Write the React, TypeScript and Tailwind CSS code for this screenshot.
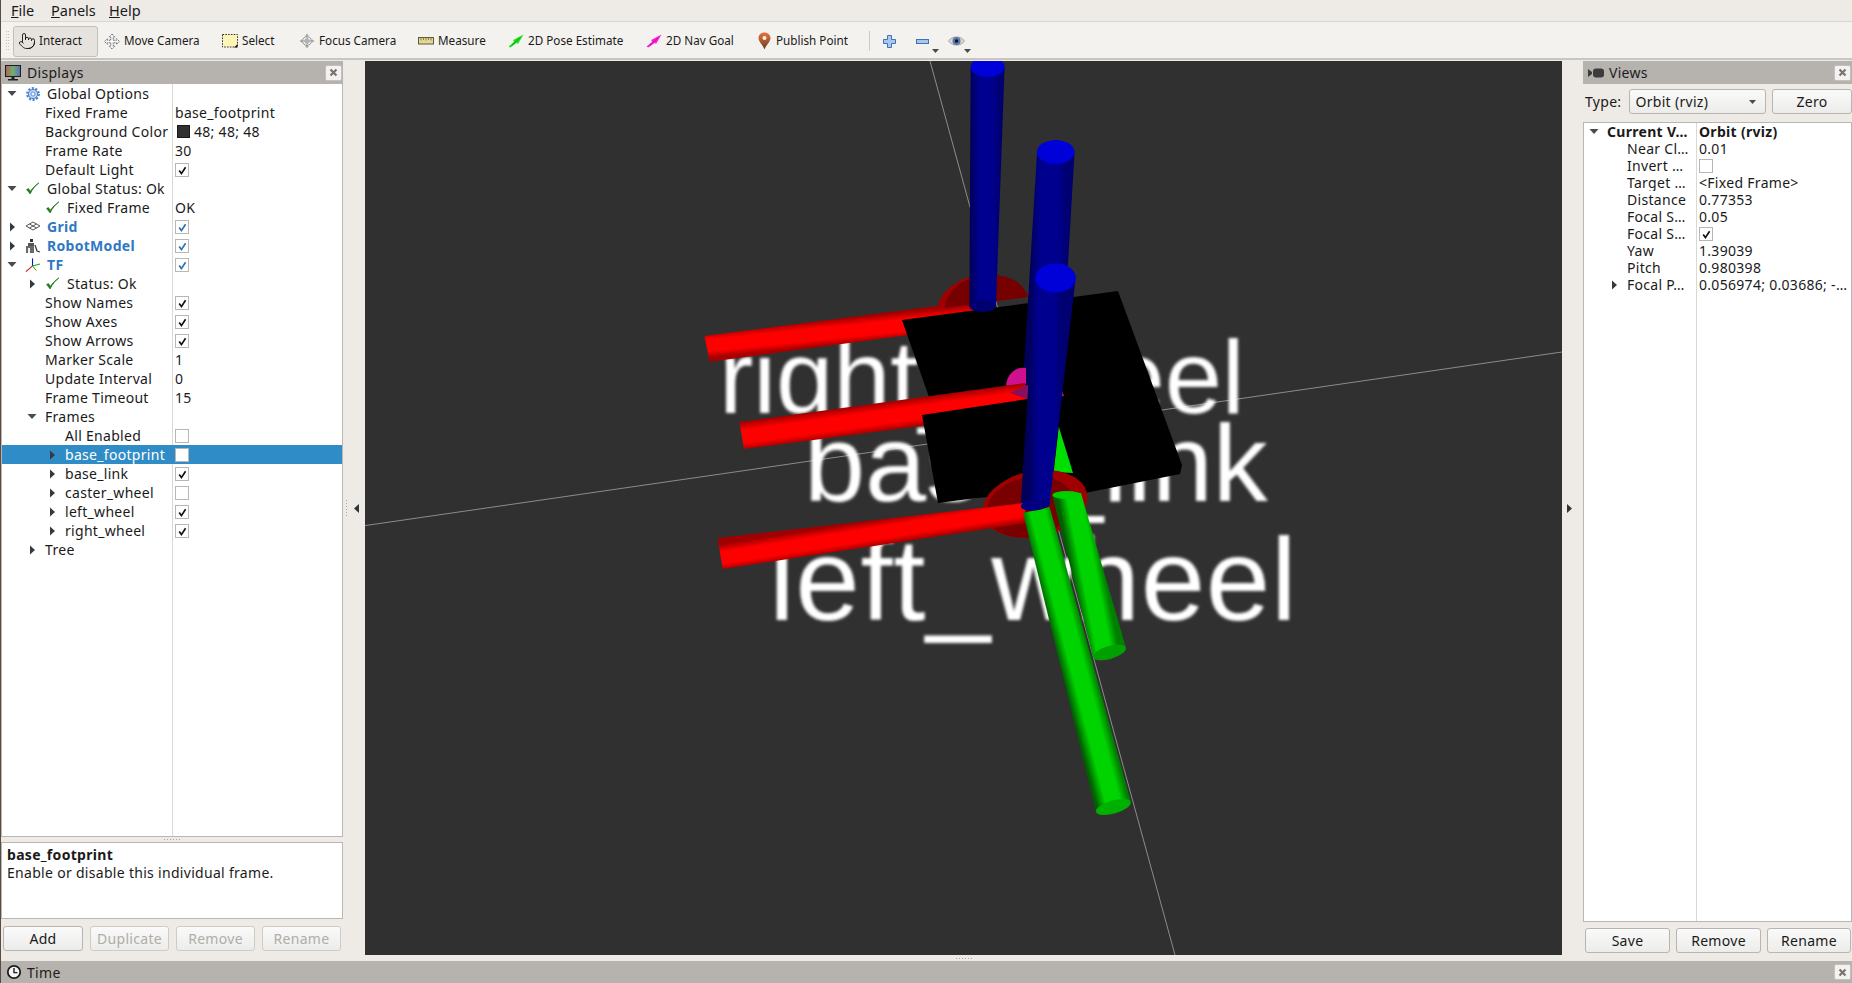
import React from "react";
import { Pointer } from "lucide-react";

type P = [number, number];

function Cyl({ id, a1, a2, b1, b2, c }: { id: string; a1: P; a2: P; b1: P; b2: P; c: [string, string, string] }) {
  const x1 = (a1[0] + b1[0]) / 2, y1 = (a1[1] + b1[1]) / 2, x2 = (a2[0] + b2[0]) / 2, y2 = (a2[1] + b2[1]) / 2;
  return (
    <>
      <defs>
        <linearGradient id={id} gradientUnits="userSpaceOnUse" x1={x1} y1={y1} x2={x2} y2={y2}>
          <stop offset="0" stopColor={c[0]} />
          <stop offset="0.3" stopColor={c[1]} />
          <stop offset="0.75" stopColor={c[1]} />
          <stop offset="1" stopColor={c[2]} />
        </linearGradient>
      </defs>
      <polygon points={`${a1} ${a2} ${b2} ${b1}`} fill={`url(#${id})`} />
    </>
  );
}

const BLUE: [string, string, string] = ["#00005a", "#00008e", "#000070"];
const RED: [string, string, string] = ["#a00000", "#ff0000", "#a80000"];
const GREEN: [string, string, string] = ["#006000", "#00d400", "#008000"];

function Scene() {
  return (
    <svg viewBox="365 61 1197 894" className="w-full h-full block" preserveAspectRatio="none">
      <defs>
        <filter id="soft" x="-5%" y="-5%" width="110%" height="110%">
          <feGaussianBlur stdDeviation="1.8" />
        </filter>
      </defs>
      <rect x="365" y="61" width="1197" height="894" fill="#303030" />
      <line x1="930" y1="61" x2="1175" y2="955" stroke="#8c8c8c" strokeWidth="1" />
      <line x1="365" y1="525.6" x2="1562" y2="352" stroke="#8c8c8c" strokeWidth="1" />
      <g fill="#ffffff" filter="url(#soft)" style={{ fontFamily: "'Liberation Sans', sans-serif" }}>
        <text x="719" y="413" fontSize="103" textLength="526">right_wheel</text>
        <text x="804" y="501" fontSize="110" textLength="464">base_link</text>
        <text x="769" y="620" fontSize="116" textLength="528">left_wheel</text>
      </g>

      <Cyl id="r1" a1={[704.5, 336]} a2={[709.7, 361.7]} b1={[975, 301]} b2={[975, 326]} c={RED} />
      <path d="M937 309 A 47 36 -8 0 1 1028 297 Z" fill="#a00000" />
      <path d="M945 308 A 42 30 -8 0 1 1028 297 Z" fill="#760000" />
      <polygon points="902,320 1118,291 1182,465 1180,474 1000,510 930,400" fill="#000000" />
      <Cyl id="b1" a1={[970.6, 67]} a2={[1004.6, 67]} b1={[969.4, 306]} b2={[996, 306]} c={BLUE} />
      <ellipse cx="982.7" cy="306" rx="13.3" ry="6" fill="#000070" />
      <ellipse cx="987.6" cy="67" rx="17" ry="10" fill="#0000d8" />

      <Cyl id="b2" a1={[1037, 153]} a2={[1074.5, 153]} b1={[1022, 400]} b2={[1060, 400]} c={BLUE} />
      <ellipse cx="1055.7" cy="152" rx="18.8" ry="12" fill="#0000d8" />

      <path d="M1006 386 A 17 19 0 0 1 1026 368 L1026 384 Z" fill="#d0108c" />
      <path d="M1060 385 L1064 396 L1026 400 Z" fill="#d0108c" />
      <Cyl id="r2" a1={[739.3, 422]} a2={[744, 449]} b1={[1025, 383]} b2={[1028, 412]} c={RED} />
      <polygon points="1010,393 1026,385 1048,392 1030,400" fill="#8a0f5a" />
      <polygon points="922,415 1034,398 1090,490 976,498 938,503" fill="#000000" />

      <polygon points="1058.8,426.7 1073,473 1053.7,472" fill="#00e000" />
      <ellipse cx="1035" cy="504" rx="53" ry="33" transform="rotate(-12 1035 504)" fill="#a00000" />
      <ellipse cx="1030" cy="507" rx="44" ry="30" transform="rotate(-12 1030 507)" fill="#780000" />
      <Cyl id="r3" a1={[717.6, 538]} a2={[722.7, 569]} b1={[1024, 503]} b2={[1027, 523]} c={RED} />

      <Cyl id="g2" a1={[1052.5, 496]} a2={[1081, 493]} b1={[1093, 657]} b2={[1126, 648]} c={GREEN} />
      <ellipse cx="1066.8" cy="495" rx="14.4" ry="4" fill="#00d000" />
      <ellipse cx="1109.5" cy="652.5" rx="17" ry="6.5" transform="rotate(-16 1109.5 652.5)" fill="#00a000" />

      <Cyl id="g1" a1={[1023, 513]} a2={[1049.7, 507]} b1={[1096, 812]} b2={[1130.8, 802]} c={GREEN} />
      <ellipse cx="1113.4" cy="807" rx="18" ry="6.5" transform="rotate(-16 1113.4 807)" fill="#00b000" />

      <Cyl id="b3" a1={[1035, 280]} a2={[1075.4, 280]} b1={[1020.8, 503]} b2={[1049.7, 503]} c={BLUE} />
      <ellipse cx="1035.2" cy="505" rx="14.5" ry="5.5" transform="rotate(-6 1035.2 505)" fill="#000080" />
      <ellipse cx="1055.5" cy="278" rx="20.4" ry="14.5" fill="#0000d8" />
    </svg>
  );
}

/* ------------ icons ------------ */
const Check = ({ c = "#111111" }: { c?: string }) => (
  <svg width="13" height="13" viewBox="0 0 13 13" className="block">
    <path d="M3.2 6.6 L5.4 9.6 L9.6 3.2" fill="none" stroke={c} strokeWidth="1.7" />
  </svg>
);
const Box = ({ on, c }: { on?: boolean; c?: string }) => (
  <span className="block w-[14px] h-[14px] border border-[#b9b6b3] bg-white">{on && <Check c={c} />}</span>
);
const ArrowR = () => (
  <svg width="7" height="10" viewBox="0 0 7 10" className="block"><path d="M1 0.5 L6 5 L1 9.5 Z" fill="#333b40" /></svg>
);
const ArrowD = () => (
  <svg width="10" height="7" viewBox="0 0 10 7" className="block"><path d="M0.5 1 L9.5 1 L5 6 Z" fill="#4a4a4a" /></svg>
);
const GreenCheck = () => (
  <svg width="16" height="16" viewBox="0 0 16 16" className="block">
    <path d="M1.6 8.6 L5.2 13 C7 8.6 10 5 14 1.8 C10 4.6 7.4 7.4 5.4 10.2 L3.4 7.6 Z" fill="#1f7a1f" stroke="#1f7a1f" strokeWidth="0.7" />
  </svg>
);
const Gear = () => (
  <svg width="16" height="16" viewBox="0 0 16 16" className="block">
    <circle cx="8" cy="8" r="5.6" fill="none" stroke="#4f82cc" strokeWidth="2.6" strokeDasharray="2 1.5" />
    <circle cx="8" cy="8" r="4.6" fill="#bcd3f2" stroke="#4f82cc" strokeWidth="1" />
    <circle cx="8" cy="8" r="2" fill="#f2f6fc" stroke="#4f82cc" strokeWidth="0.8" />
  </svg>
);
const GridIcon = () => (
  <svg width="16" height="16" viewBox="0 0 16 16" className="block">
    <path d="M1 7 L8 3 L15 7 L8 11 Z M4.5 5 L11.5 9 M11.5 5 L4.5 9" fill="none" stroke="#444" strokeWidth="0.9" />
  </svg>
);
const RobotIcon = () => (
  <svg width="16" height="16" viewBox="0 0 16 16" className="block">
    <rect x="5" y="1" width="3" height="3" fill="#333" />
    <rect x="3" y="5" width="6" height="3" fill="#555" />
    <rect x="1" y="8" width="8" height="7" fill="#6a6a6a" />
    <rect x="3" y="10" width="2" height="5" fill="#f2f2f2" />
    <path d="M10 7 L12 13 L15 14" fill="none" stroke="#333" strokeWidth="1.2" />
  </svg>
);
const TfIcon = () => (
  <svg width="17" height="16" viewBox="0 0 17 16" className="block">
    <path d="M8 9 L8 1" stroke="#1414d0" strokeWidth="1.2" />
    <path d="M8 9 L16 7" stroke="#10b010" strokeWidth="1.2" />
    <path d="M8 9 L1 15" stroke="#e01010" strokeWidth="1.2" />
    <path d="M8 9 L12 14" stroke="#10b010" strokeWidth="1" />
  </svg>
);
const Monitor = () => (
  <svg width="17" height="16" viewBox="0 0 17 16" className="block">
    <defs>
      <linearGradient id="scr" x1="0" y1="0" x2="1" y2="0">
        <stop offset="0" stopColor="#b0605c" />
        <stop offset="0.5" stopColor="#6fb06a" />
        <stop offset="1" stopColor="#5c6cb8" />
      </linearGradient>
    </defs>
    <rect x="0.5" y="0.5" width="15" height="11" fill="url(#scr)" stroke="#1c1c1c" />
    <rect x="6.5" y="12" width="3" height="2" fill="#222" />
    <rect x="3" y="14" width="10" height="1.5" fill="#222" />
  </svg>
);
const CamIcon = () => (
  <svg width="16" height="10" viewBox="0 0 16 10" className="block">
    <path d="M0 1 L4 4 L4 6 L0 9 Z" fill="#3c3c3c" />
    <rect x="5" y="0.5" width="11" height="9" rx="3" fill="#3c3c3c" />
  </svg>
);
const Clock = () => (
  <svg width="16" height="16" viewBox="0 0 16 16" className="block">
    <circle cx="8" cy="8" r="6.2" fill="#f5f5f5" stroke="#1e1e1e" strokeWidth="1.8" />
    <path d="M8 4 L8 8.6 L11.5 8.6" fill="none" stroke="#1e1e1e" strokeWidth="1.4" />
  </svg>
);
const MoveIcon = () => (
  <svg width="17" height="17" viewBox="0 0 17 17" className="block">
    <path d="M8.5 0.5 L11.5 3.8 L9.8 3.8 L9.8 7.2 L13.2 7.2 L13.2 5.5 L16.5 8.5 L13.2 11.5 L13.2 9.8 L9.8 9.8 L9.8 13.2 L11.5 13.2 L8.5 16.5 L5.5 13.2 L7.2 13.2 L7.2 9.8 L3.8 9.8 L3.8 11.5 L0.5 8.5 L3.8 5.5 L3.8 7.2 L7.2 7.2 L7.2 3.8 L5.5 3.8 Z" fill="#f8f8f8" stroke="#555" strokeWidth="0.9" strokeDasharray="1.6 0.8" />
  </svg>
);
const SelectIcon = () => (
  <svg width="16" height="14" viewBox="0 0 16 14" className="block">
    <rect x="0.5" y="0.5" width="15" height="12.5" fill="#fdf5b5" stroke="#333" strokeDasharray="1.6 1.2" />
    <path d="M12 13.5 L15.5 13.5 L15.5 10 Z" fill="#222" />
  </svg>
);
const FocusIcon = () => (
  <svg width="18" height="18" viewBox="0 0 18 18" className="block">
    <circle cx="9" cy="9" r="5" fill="#efefef" stroke="#8a8a8a" />
    <circle cx="9" cy="9" r="2.4" fill="none" stroke="#8a8a8a" strokeWidth="0.8" />
    <path d="M9 4 L9 14 M4 9 L14 9" stroke="#8a8a8a" strokeWidth="0.8" />
    <path d="M9 0.5 L11 3.5 L7 3.5 Z M9 17.5 L11 14.5 L7 14.5 Z M0.5 9 L3.5 7 L3.5 11 Z M17.5 9 L14.5 7 L14.5 11 Z" fill="#a8a8a8" />
  </svg>
);
const RulerIcon = () => (
  <svg width="16" height="8" viewBox="0 0 16 8" className="block">
    <rect x="0.5" y="0.5" width="15" height="6.5" fill="#e5d896" stroke="#5f5a3a" />
    <path d="M3 1 V3.5 M5.5 1 V3 M8 1 V3.5 M10.5 1 V3 M13 1 V3.5" stroke="#5f5a3a" strokeWidth="0.7" />
  </svg>
);
const ArrowIcon = ({ c, d }: { c: string; d: string }) => (
  <svg width="16" height="14" viewBox="0 0 16 14" className="block">
    <path d="M0.5 12.5 L6 8 L5.2 6 L15.5 0.5 L10 10 L8.8 8.8 L2.4 13.6 Z" fill={c} />
    <path d="M3.5 11.5 L12.5 3.5" stroke={d} strokeWidth="0.7" />
  </svg>
);
const PinIcon = () => (
  <svg width="13" height="18" viewBox="0 0 13 18" className="block">
    <defs>
      <linearGradient id="pin" x1="0" y1="0" x2="0" y2="1">
        <stop offset="0" stopColor="#e8743c" />
        <stop offset="1" stopColor="#6a3c22" />
      </linearGradient>
    </defs>
    <path d="M6.5 0.5 C3 0.5 0.5 3 0.5 6 C0.5 10 5 13 6.5 17.5 C8 13 12.5 10 12.5 6 C12.5 3 10 0.5 6.5 0.5 Z" fill="url(#pin)" />
    <circle cx="6.5" cy="6" r="2" fill="#fbeee6" />
  </svg>
);
const PlusIcon = () => (
  <svg width="13" height="13" viewBox="0 0 13 13" className="block">
    <path d="M4.5 0.5 H8.5 V4.5 H12.5 V8.5 H8.5 V12.5 H4.5 V8.5 H0.5 V4.5 H4.5 Z" fill="#a9c6ec" stroke="#4272b4" />
  </svg>
);
const MinusIcon = () => (
  <svg width="13" height="5" viewBox="0 0 13 5" className="block">
    <rect x="0.5" y="0.5" width="12" height="4" fill="#a9c6ec" stroke="#4272b4" />
  </svg>
);
const EyeIcon = () => (
  <svg width="17" height="12" viewBox="0 0 17 12" className="block">
    <path d="M0.5 6 C4 0.5 13 0.5 16.5 6 C13 11.5 4 11.5 0.5 6 Z" fill="#d8d8d8" stroke="#8f8f8f" strokeWidth="0.7" />
    <circle cx="8.5" cy="6" r="4" fill="#5b77a8" />
    <circle cx="8.5" cy="6" r="1.7" fill="#0d1420" />
  </svg>
);
const Drop = () => (
  <svg width="7" height="4" viewBox="0 0 7 4" className="block"><path d="M0 0 H7 L3.5 4 Z" fill="#4a4a4a" /></svg>
);

const Close = () => (
  <span className="flex items-center justify-center w-[17px] h-[16px] rounded-[2px] border border-[#c4c1bd] bg-[#f4f2f0]">
    <svg width="9" height="9" viewBox="0 0 9 9" className="block">
      <path d="M1.5 1.5 L7.5 7.5 M7.5 1.5 L1.5 7.5" stroke="#77736f" strokeWidth="2.2" />
    </svg>
  </span>
);

const Btn = ({ children, w, off }: { children: React.ReactNode; w: string; off?: boolean }) => (
  <button className={`${w} h-[25px] flex items-center justify-center rounded-[3px] border border-[#b8b4b0] bg-linear-to-b from-[#fafafa] to-[#ececea] ${off ? "text-[#b0adaa] border-[#cfccc8]" : "text-[#1a1a1a]"}`}>
    {children}
  </button>
);

const Title = ({ icon, text, className }: { icon: React.ReactNode; text: string; className: string }) => (
  <div className={`flex items-center bg-[#b6b2ae] text-[#1c1c1c] text-[14px] ${className}`}>
    <span className="w-[17px] flex justify-center items-center shrink-0">{icon}</span>
    <span className="ml-[5px] flex-1">{text}</span>
    <span className="mr-[1px]"><Close /></span>
  </div>
);

/* ------------ tree ------------ */
type Row = {
  t: string;
  v?: React.ReactNode;
  lvl: 0 | 1 | 2;
  a?: "r" | "d";
  i?: React.ReactNode;
  cb?: boolean;
  blue?: boolean;
  bold?: boolean;
  sel?: boolean;
};

const disp: Row[] = [
  { t: "Global Options", lvl: 0, a: "d", i: <Gear /> },
  { t: "Fixed Frame", lvl: 1, v: "base_footprint" },
  { t: "Background Color", lvl: 1, v: <span className="flex items-center gap-[4px]"><span className="ml-[2px] w-[13px] h-[13px] bg-[#303030] border border-[#1a1a1a]" />48; 48; 48</span> },
  { t: "Frame Rate", lvl: 1, v: "30" },
  { t: "Default Light", lvl: 1, cb: true },
  { t: "Global Status: Ok", lvl: 0, a: "d", i: <GreenCheck /> },
  { t: "Fixed Frame", lvl: 1, i: <GreenCheck />, v: "OK" },
  { t: "Grid", lvl: 0, a: "r", i: <GridIcon />, cb: true, blue: true },
  { t: "RobotModel", lvl: 0, a: "r", i: <RobotIcon />, cb: true, blue: true },
  { t: "TF", lvl: 0, a: "d", i: <TfIcon />, cb: true, blue: true },
  { t: "Status: Ok", lvl: 1, a: "r", i: <GreenCheck /> },
  { t: "Show Names", lvl: 1, cb: true },
  { t: "Show Axes", lvl: 1, cb: true },
  { t: "Show Arrows", lvl: 1, cb: true },
  { t: "Marker Scale", lvl: 1, v: "1" },
  { t: "Update Interval", lvl: 1, v: "0" },
  { t: "Frame Timeout", lvl: 1, v: "15" },
  { t: "Frames", lvl: 1, a: "d" },
  { t: "All Enabled", lvl: 2, cb: false },
  { t: "base_footprint", lvl: 2, a: "r", cb: false, sel: true },
  { t: "base_link", lvl: 2, a: "r", cb: true },
  { t: "caster_wheel", lvl: 2, a: "r", cb: false },
  { t: "left_wheel", lvl: 2, a: "r", cb: true },
  { t: "right_wheel", lvl: 2, a: "r", cb: true },
  { t: "Tree", lvl: 1, a: "r" },
];

const views: Row[] = [
  { t: "Current V…", lvl: 0, a: "d", bold: true, v: <span className="font-bold">Orbit (rviz)</span> },
  { t: "Near Cl…", lvl: 1, v: "0.01" },
  { t: "Invert …", lvl: 1, cb: false },
  { t: "Target …", lvl: 1, v: "<Fixed Frame>" },
  { t: "Distance", lvl: 1, v: "0.77353" },
  { t: "Focal S…", lvl: 1, v: "0.05" },
  { t: "Focal S…", lvl: 1, cb: true },
  { t: "Yaw", lvl: 1, v: "1.39039" },
  { t: "Pitch", lvl: 1, v: "0.980398" },
  { t: "Focal P…", lvl: 1, a: "r", v: "0.056974; 0.03686; -…" },
];

function TreeRows({ rows, h, col }: { rows: Row[]; h: string; col: string }) {
  return (
    <>
      {rows.map((r, i) => (
        <div key={i} className={`flex ${h} shrink-0 items-center ${r.sel ? "bg-[#308cc6] text-white" : ""}`}>
          <div className={`${col} h-full shrink-0 flex items-center overflow-hidden whitespace-nowrap border-r ${r.sel ? "border-[#308cc6]" : "border-[#dad8d6]"} ${r.lvl === 1 ? "pl-[20px]" : r.lvl === 2 ? "pl-[40px]" : ""}`}>
            <span className="w-[20px] shrink-0 flex justify-center items-center">
              {r.a === "r" ? <ArrowR /> : r.a === "d" ? <ArrowD /> : null}
            </span>
            <span className="ml-[3px] flex items-center">
              {r.i && <span className="w-[16px] mr-[6px] flex justify-center">{r.i}</span>}
              <span className={r.blue ? "font-bold text-[#2f78c4]" : r.bold ? "font-bold" : ""}>{r.t}</span>
            </span>
          </div>
          <div className="pl-[2px] flex-1 whitespace-nowrap overflow-hidden flex items-center">
            {r.cb !== undefined ? <Box on={r.cb} c={r.blue ? "#2f6fb4" : "#111111"} /> : r.v}
          </div>
        </div>
      ))}
    </>
  );
}

const Tool = ({ icon, text, className }: { icon: React.ReactNode; text: string; className: string }) => (
  <div className={`flex items-center h-[30px] shrink-0 ${className}`}>
    <span className="w-[16px] mr-[4px] flex justify-center items-center shrink-0">{icon}</span>
    <span>{text}</span>
  </div>
);

const Dots = ({ v }: { v?: boolean }) => (
  <span className={`flex ${v ? "flex-col" : ""} gap-[2px]`}>
    {[0, 1, 2, 3, 4, 5].map((k) => <span key={k} className="w-[1px] h-[1px] bg-[#a9a5a1]" />)}
  </span>
);

export default function App() {
  return (
    <div className="w-[1852px] h-[983px] overflow-hidden flex flex-col bg-[#eeebe7] text-[#1a1a1a] text-[14px] tracking-[0.3px] [font-family:'Noto_Sans',sans-serif] border-l border-[#5a4b44]">
      {/* menu */}
      <div className="h-[22px] shrink-0 flex items-center text-[14.5px] tracking-normal bg-[#eeebe7] border-b border-[#d9d6d2] pl-[10px]">
        <span className="w-[40px]"><u>F</u>ile</span>
        <span className="w-[58px]"><u>P</u>anels</span>
        <span><u>H</u>elp</span>
      </div>
      {/* toolbar */}
      <div className="h-[38px] shrink-0 flex items-center bg-[#f4f2ef] border-b-2 border-[#c9c6c2] text-[11.7px] tracking-normal pl-[5px] pt-[2px]">
        <span className="flex flex-wrap w-[4px] gap-[1px] h-[20px] mr-[3px] overflow-hidden">
          {Array.from({ length: 14 }).map((_, k) => <span key={k} className="w-[1px] h-[1px] bg-[#c4c1bd]" />)}
        </span>
        <div className="w-[85px] h-[31px] shrink-0 flex items-center pl-[4px] mr-[1px] rounded-[3px] border border-[#c2bfbb] bg-[#e6e3df]">
          <span className="w-[18px] mr-[3px] flex justify-center"><Pointer size={18} strokeWidth={1.2} color="#111" /></span>
          Interact
        </div>
        <Tool className="w-[117px] pl-[5px]" icon={<MoveIcon />} text="Move Camera" />
        <Tool className="w-[77px] pl-[6px]" icon={<SelectIcon />} text="Select" />
        <Tool className="w-[119px] pl-[6px]" icon={<FocusIcon />} text="Focus Camera" />
        <Tool className="w-[90px] pl-[6px]" icon={<RulerIcon />} text="Measure" />
        <Tool className="w-[138px] pl-[6px]" icon={<ArrowIcon c="#1ce61c" d="#0a7a0a" />} text="2D Pose Estimate" />
        <Tool className="w-[110px] pl-[6px]" icon={<ArrowIcon c="#ff1cdc" d="#a00a8a" />} text="2D Nav Goal" />
        <Tool className="w-[119px] pl-[6px]" icon={<PinIcon />} text="Publish Point" />
        <span className="w-[1px] h-[20px] bg-[#cfccc8] mr-[13px]" />
        <span className="mr-[20px]"><PlusIcon /></span>
        <span className="relative mr-[19px] w-[13px] flex">
          <MinusIcon />
          <span className="absolute left-[16px] top-[10px]"><Drop /></span>
        </span>
        <span className="relative w-[17px] flex">
          <EyeIcon />
          <span className="absolute left-[16px] top-[14px]"><Drop /></span>
        </span>
      </div>

      {/* middle */}
      <div className="flex-1 min-h-0 flex pt-[1px]">
        {/* left panel */}
        <div className="w-[342px] shrink-0 flex flex-col">
          <Title className="h-[23px] shrink-0 pl-[4px]" icon={<Monitor />} text="Displays" />
          <div className="h-[753px] shrink-0 bg-white border-r border-l border-b border-[#bab7b3] flex flex-col overflow-hidden">
            <TreeRows rows={disp} h="h-[19px]" col="w-[171px]" />
            <div className="flex-1 flex"><div className="w-[171px] border-r border-[#dad8d6]" /></div>
          </div>
          <div className="h-[5px] flex items-center justify-center shrink-0"><Dots /></div>
          <div className="h-[77px] shrink-0 bg-white border border-[#bab7b3] px-[5px] pt-[3px] leading-[17.5px]">
            <div className="font-bold">base_footprint</div>
            <div>Enable or disable this individual frame.</div>
          </div>
          <div className="flex gap-[7px] pl-[2px] pt-[7px]">
            <Btn w="w-[80px]">Add</Btn>
            <Btn w="w-[79px]" off>Duplicate</Btn>
            <Btn w="w-[79px]" off>Remove</Btn>
            <Btn w="w-[79px]" off>Rename</Btn>
          </div>
        </div>

        {/* left splitter */}
        <div className="w-[22px] shrink-0 h-[894px] flex items-center">
          <span className="ml-[3px] mr-[7px]"><Dots v /></span>
          <svg width="5" height="9" viewBox="0 0 5 9" className="block"><path d="M5 0 V9 L0 4.5 Z" fill="#333" /></svg>
        </div>

        {/* viewport */}
        <div className="w-[1197px] shrink-0 flex flex-col">
          <div className="h-[894px] shrink-0"><Scene /></div>
          <div className="h-[6px] flex items-center justify-center"><Dots /></div>
        </div>

        {/* right splitter */}
        <div className="w-[21px] shrink-0 h-[894px] flex items-center">
          <svg width="5" height="9" viewBox="0 0 5 9" className="block ml-[5px]"><path d="M0 0 V9 L5 4.5 Z" fill="#333" /></svg>
        </div>

        {/* right panel */}
        <div className="flex-1 min-w-0 flex flex-col">
          <Title className="h-[23px] shrink-0 pl-[4px]" icon={<CamIcon />} text="Views" />
          <div className="h-[38px] shrink-0 flex items-start pt-[5px] pl-[2px]">
            <span className="w-[45px] leading-[25px]">Type:</span>
            <div className="w-[138px] h-[25px] flex items-center justify-between pl-[5px] pr-[9px] rounded-[3px] border border-[#b8b4b0] bg-linear-to-b from-[#fafafa] to-[#ececea]">
              Orbit (rviz)
              <Drop />
            </div>
            <span className="ml-[6px]"><Btn w="w-[80px]">Zero</Btn></span>
          </div>
          <div className="h-[800px] shrink-0 bg-white border border-[#bab7b3] flex flex-col leading-[17px] overflow-hidden">
            <TreeRows rows={views} h="h-[17px]" col="w-[113px]" />
            <div className="flex-1 flex"><div className="w-[113px] border-r border-[#dad8d6]" /></div>
          </div>
          <div className="flex gap-[6px] pl-[2px] pt-[6px]">
            <Btn w="w-[85px]">Save</Btn>
            <Btn w="w-[85px]">Remove</Btn>
            <Btn w="w-[84px]">Rename</Btn>
          </div>
        </div>
      </div>

      {/* time */}
      <div className="h-[22px] shrink-0">
        <Title className="h-[22px] pl-[4px]" icon={<Clock />} text="Time" />
      </div>
    </div>
  );
}
